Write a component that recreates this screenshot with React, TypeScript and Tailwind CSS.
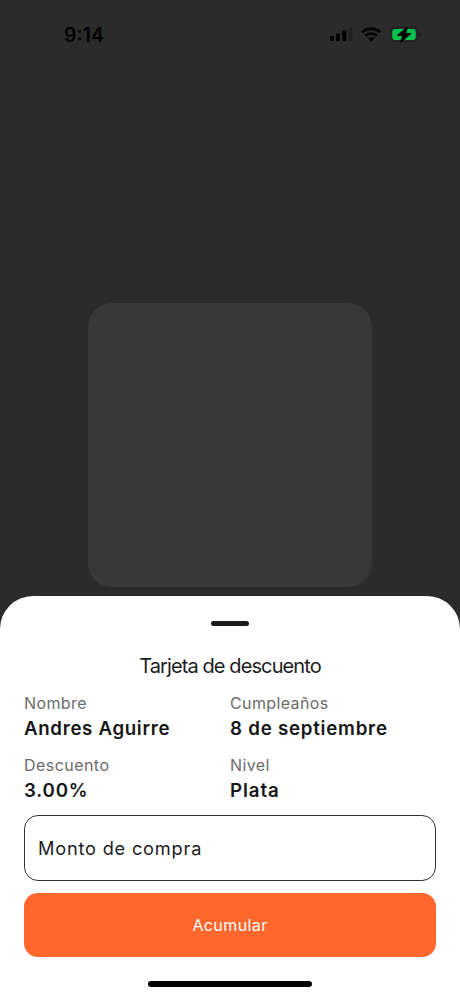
import { useState } from 'react';

const details = [
  { label: 'Nombre', value: 'Andres Aguirre', labelSpacing: 'tracking-[0.4px]', valueSpacing: 'tracking-[0.67px]' },
  { label: 'Cumpleaños', value: '8 de septiembre', labelSpacing: 'tracking-[0.37px]', valueSpacing: 'tracking-[0.77px]' },
  { label: 'Descuento', value: '3.00%', labelSpacing: 'tracking-[0.45px]', valueSpacing: 'tracking-[0.8px]' },
  { label: 'Nivel', value: 'Plata', labelSpacing: 'tracking-[0.4px]', valueSpacing: 'tracking-[0.9px]' },
];

function SignalIcon() {
  return (
    <svg width="23" height="15" viewBox="0 0 23 15" fill="#000">
      <rect x="0" y="9" width="3.8" height="5.2" rx="1.2" />
      <rect x="6" y="6.6" width="4" height="7.6" rx="1.2" />
      <rect x="12.2" y="3.2" width="4" height="11" rx="1.2" />
      <rect x="18.6" y="0.8" width="3.6" height="13.4" rx="1.2" fill="#202020" />
    </svg>
  );
}

function WifiIcon() {
  return (
    <svg width="20" height="15" viewBox="0 0 20 15" fill="none" stroke="#000" strokeWidth="2.7">
      <path d="M1.2 5.4a12.8 12.8 0 0 1 18 0" />
      <path d="M4.4 8.8a8.4 8.4 0 0 1 11.6 0" />
      <path d="M10.2 14.5 7 11.3a4.6 4.6 0 0 1 6.4 0Z" fill="#000" stroke="none" />
    </svg>
  );
}

function BatteryIcon() {
  return (
    <svg width="32" height="17" viewBox="0 0 32 17">
      <rect x="0.6" y="1.4" width="27" height="14" rx="4.6" fill="none" stroke="#202020" strokeWidth="1.2" />
      <path d="M29.4 6.3c1.3.5 1.9 1.2 1.9 2.1s-.6 1.6-1.9 2.1Z" fill="#1c1c1c" />
      <rect x="2.2" y="3" width="23.6" height="11" rx="3.2" fill="#05c34b" />
      <path
        d="M17.4 1.2 7.6 9.4h5.2l-2 6.6 9.9-8.5h-5.3Z"
        fill="#000"
        stroke="#000"
        strokeWidth="1.2"
        strokeLinejoin="round"
      />
    </svg>
  );
}

export default function App() {
  const [amount, setAmount] = useState('');

  return (
    <div className="flex h-[997px] w-[460px] flex-col overflow-hidden bg-[#2b2b2b] font-['Inter',sans-serif]">
      {/* Status bar */}
      <div className="flex h-[69px] shrink-0 items-center justify-between pl-16 pr-[38px]">
        <span className="text-[19.5px] font-semibold leading-6 text-black">9:14</span>
        <div className="flex items-center">
          <SignalIcon />
          <div className="ml-2 mr-[9px]">
            <WifiIcon />
          </div>
          <BatteryIcon />
        </div>
      </div>

      {/* Scanner area */}
      <div className="flex h-[526.5px] shrink-0 justify-center pt-[233.5px]">
        <div className="size-[284.5px] rounded-[24px] bg-[#383838]" />
      </div>

      {/* Bottom sheet */}
      <div className="flex flex-1 flex-col rounded-t-[33px] bg-white px-6">
        <div className="mx-auto mt-[25.5px] h-[5px] w-[38px] shrink-0 rounded-full bg-[#1a1a1c]" />
        <h1 className="mt-[26.2px] text-center text-[20px] leading-7 tracking-[-0.9px] text-[#1c1c1e]">
          Tarjeta de descuento
        </h1>

        <div className="mt-[11px] grid grid-cols-2 gap-y-3">
          {details.map((d) => (
            <div key={d.label}>
              <p className={`text-[16px] leading-[25px] text-[#6b6b6b] ${d.labelSpacing}`}>{d.label}</p>
              <p className={`text-[18.7px] font-semibold leading-[25px] text-[#161618] ${d.valueSpacing}`}>{d.value}</p>
            </div>
          ))}
        </div>

        <input
          type="text"
          value={amount}
          onChange={(e) => setAmount(e.target.value)}
          placeholder="Monto de compra"
          className="mt-[12px] h-[65.5px] w-full shrink-0 rounded-[14px] border border-[#333] px-[13px] pt-px text-[18.2px] tracking-[0.8px] text-[#1c1c1e] outline-none placeholder:text-[#1c1c1e] placeholder:opacity-100"
        />
        <button className="mt-[12px] h-[64px] w-full shrink-0 rounded-[14px] bg-[#ff672c] pt-px text-[16px] tracking-[0.4px] text-white">
          Acumular
        </button>
        <div className="mx-auto mt-[24.5px] h-[6px] w-[164px] shrink-0 rounded-full bg-black" />
      </div>
    </div>
  );
}
